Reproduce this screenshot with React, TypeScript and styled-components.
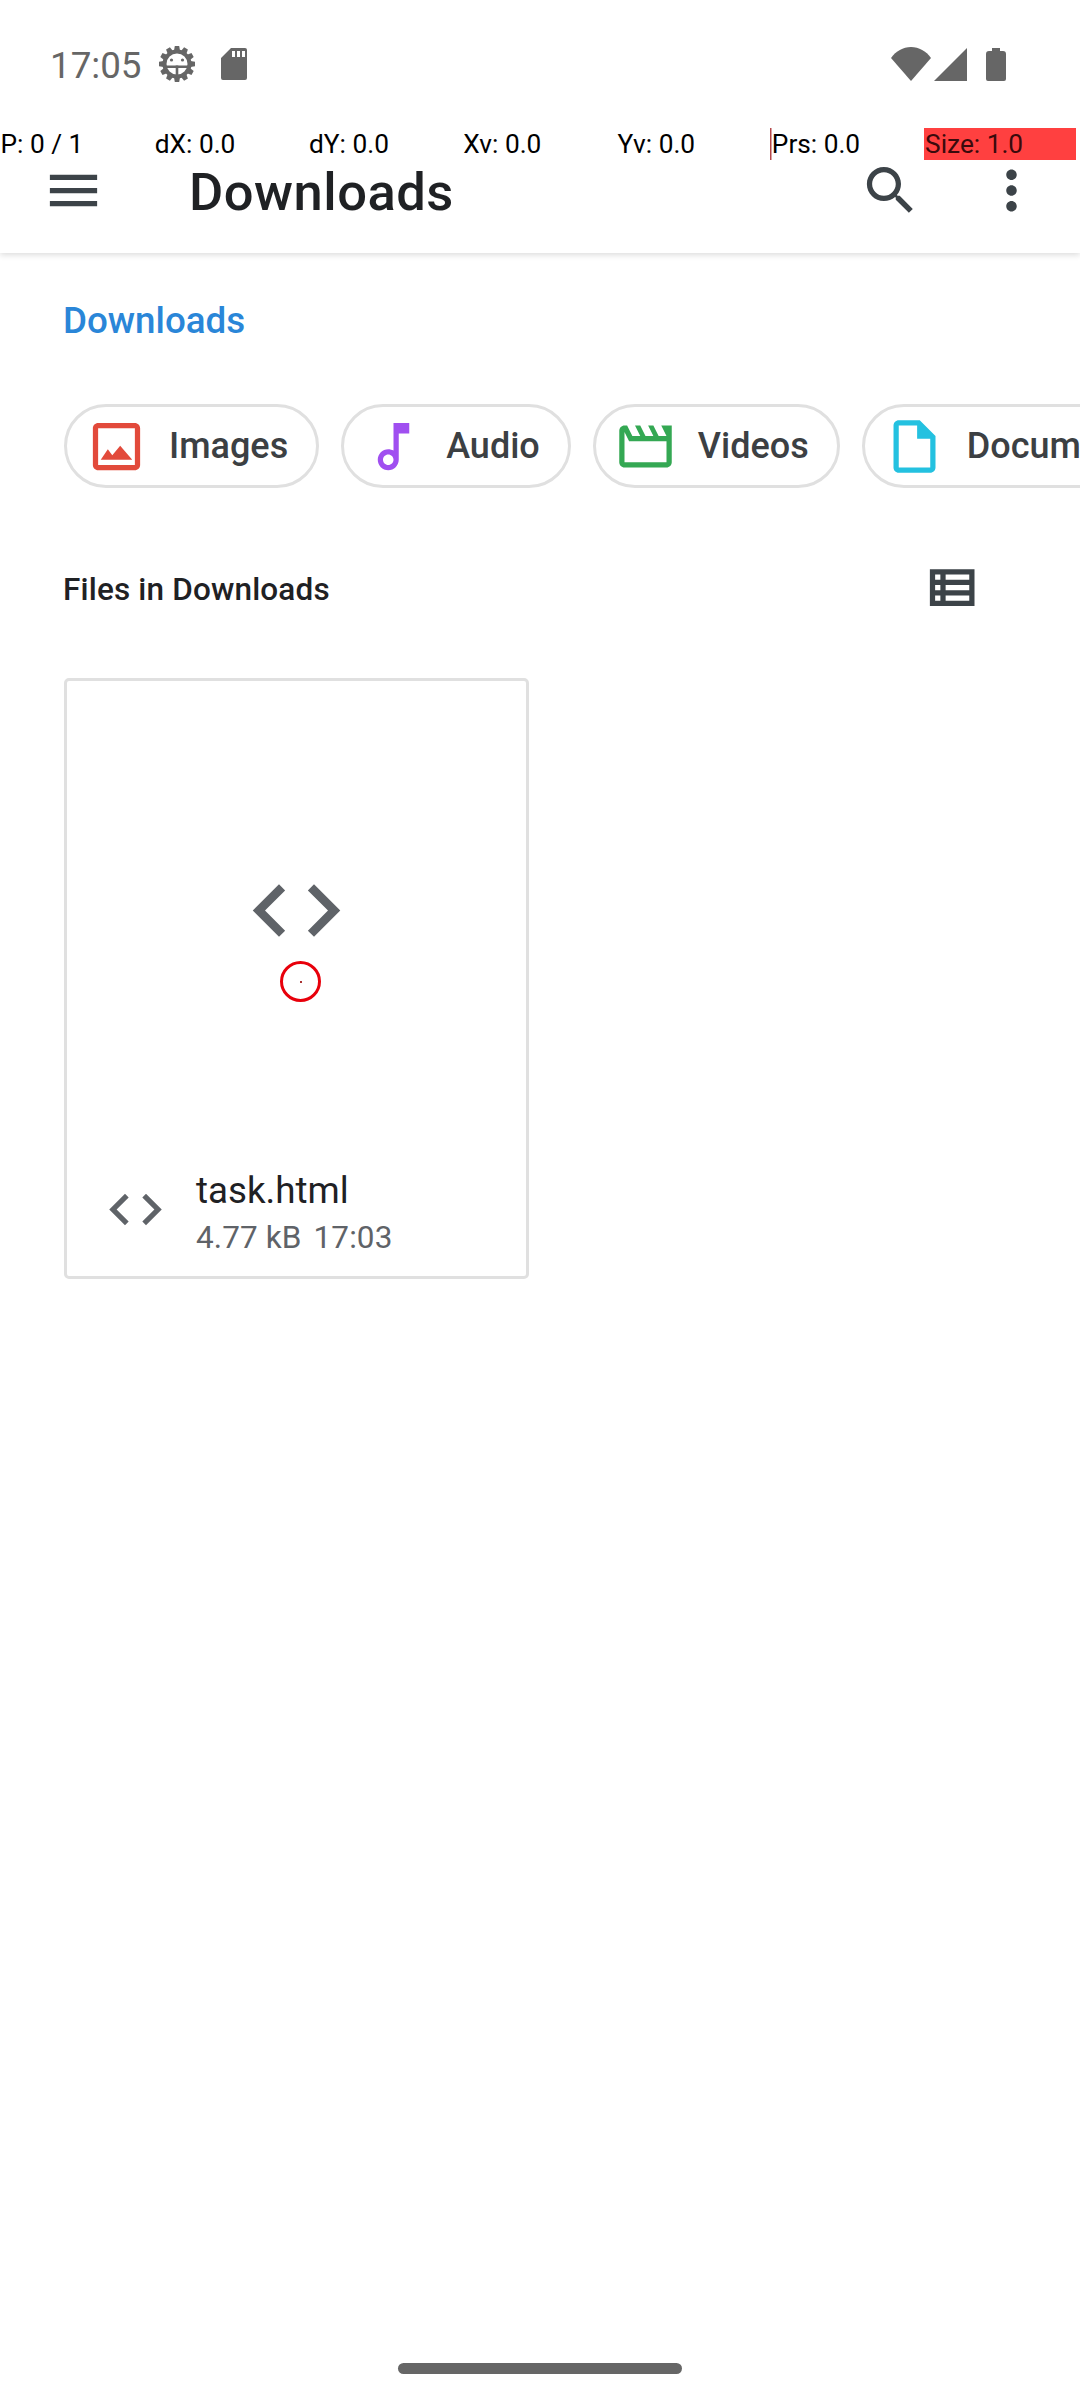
import React from 'react';
import styled, { createGlobalStyle } from 'styled-components';

const GlobalStyle = createGlobalStyle`
  html, body {
    margin: 0;
    padding: 0;
    background: #fff;
  }
  * {
    box-sizing: border-box;
  }
`;

const Screen = styled.div`
  position: relative;
  width: 1080px;
  height: 2400px;
  display: flex;
  flex-direction: column;
  overflow: hidden;
  background: #fff;
  font-family: Roboto, "Liberation Sans", sans-serif;
`;

const StatusBar = styled.div`
  height: 128px;
  flex: none;
  display: flex;
  align-items: center;
  padding: 0 74px 0 50px;
  color: #666;
`;

const Clock = styled.span`
  font-size: 36.75px;
  line-height: 43px;
  margin: 2px 16px 0 0;
`;

const StatusIcon = styled.svg<{ $gap?: number }>`
  display: block;
  flex: none;
  margin-left: ${({ $gap }) => $gap ?? 0}px;
`;

const Spacer = styled.div`
  flex: 1;
`;

const PointerStrip = styled.div`
  position: absolute;
  top: 128px;
  left: 0;
  display: flex;
  width: 1080px;
  height: 32px;
  z-index: 2;
`;

const PointerCell = styled.div<{ $bar?: 'line' | 'fill' }>`
  width: 154.28px;
  height: 32px;
  margin-left: ${({ $bar }) => ($bar ? '-1.5px' : '0')};
  margin-right: ${({ $bar }) => ($bar ? '1.5px' : '0')};
  padding-left: ${({ $bar }) => ($bar ? '1px' : '0.5px')};
  font-size: 26.25px;
  line-height: 32px;
  color: #000;
  white-space: nowrap;
  ${({ $bar }) => $bar === 'line' && `
    background: linear-gradient(#b5484a, #b5484a) no-repeat 0 0 / 1.5px 32px;
    padding-left: 2px;
  `}
  ${({ $bar }) => $bar === 'fill' && `
    background: linear-gradient(#ff4040, #ff4040) no-repeat 0 0 / 152px 32px;
    color: #3a0a0c;
  `}
`;

const Toolbar = styled.header`
  height: 125px;
  flex: none;
  display: flex;
  align-items: center;
  padding: 0 37px 0 42px;
  background: #fff;
  box-shadow: 0 2px 6px rgba(0, 0, 0, 0.14);
  clip-path: inset(0 0 -12px 0);
`;

const Title = styled.h1`
  flex: 1;
  margin: 2px 0 0 84px;
  font-size: 52.5px;
  line-height: 62px;
  font-weight: 500;
  letter-spacing: 0.5px;
  color: #1f2124;
`;

const ToolbarIcon = styled.svg<{ $gap?: number }>`
  display: block;
  flex: none;
  width: 63px;
  height: 63px;
  fill: #3c4348;
  margin-left: ${({ $gap }) => $gap ?? 0}px;
`;

const Breadcrumb = styled.div`
  margin: 46px 0 0 63px;
  font-size: 36.75px;
  line-height: 43px;
  font-weight: 500;
  color: #2a86d8;
`;

const ChipRow = styled.div`
  display: flex;
  gap: 22px;
  margin-top: 62px;
  padding-left: 64px;
  overflow: hidden;
`;

const Chip = styled.div`
  flex: none;
  height: 84px;
  display: flex;
  align-items: center;
  gap: 21px;
  padding: 0 28px 0 18px;
  border: 3px solid #e0e0e0;
  border-radius: 42px;
  font-size: 36px;
  font-weight: 500;
  color: #3c4043;
`;

const ChipIcon = styled.svg<{ $color: string }>`
  display: block;
  flex: none;
  width: 63px;
  height: 63px;
  fill: ${({ $color }) => $color};
`;

const SectionHeader = styled.div`
  height: 63px;
  margin-top: 68px;
  display: flex;
  align-items: center;
  justify-content: space-between;
  padding: 0 95px 0 63px;
`;

const SectionTitle = styled.h2`
  margin: 4px 0 0;
  font-size: 31.5px;
  line-height: 40px;
  font-weight: 500;
  letter-spacing: 0.16px;
  color: #1f2124;
`;

const ListIcon = styled.svg`
  display: block;
  width: 63px;
  height: 63px;
  fill: #3c4348;
`;

const FileCard = styled.article`
  position: relative;
  width: 465px;
  height: 601px;
  margin: 59px 0 0 64px;
  display: flex;
  flex-direction: column;
  border: 3px solid #e0e0e0;
  border-radius: 5px;
`;

const Thumbnail = styled.div`
  height: 458px;
  flex: none;
  display: flex;
  align-items: center;
  justify-content: center;
`;

const CodeIcon = styled.svg<{ $size: number }>`
  display: block;
  flex: none;
  width: ${({ $size }) => $size}px;
  height: ${({ $size }) => $size}px;
  fill: #5f6368;
`;

const CardFooter = styled.div`
  flex: 1;
  display: flex;
  align-items: center;
  gap: 29px;
  padding: 3px 0 0 37px;
`;

const FileText = styled.div`
  display: flex;
  flex-direction: column;
  margin-top: 6px;
`;

const FileName = styled.div`
  font-size: 36.75px;
  line-height: 44px;
  color: #1f2124;
`;

const FileMeta = styled.div`
  display: flex;
  gap: 12px;
  margin-top: 6px;
  font-size: 31.5px;
  line-height: 37px;
  letter-spacing: 0.1px;
  color: #5f6368;
`;

const TouchMark = styled.div`
  position: absolute;
  left: 213px;
  top: 280px;
  width: 41px;
  height: 41px;
  border: 3px solid #e8000b;
  border-radius: 50%;
  &::after {
    content: '';
    position: absolute;
    left: 16.5px;
    top: 16.5px;
    width: 2px;
    height: 2px;
    background: #a33;
  }
`;

const NavHandle = styled.div`
  position: absolute;
  left: 398px;
  bottom: 26px;
  width: 284px;
  height: 11px;
  border-radius: 6px;
  background: #666;
`;

const pointerValues = ['P: 0 / 1', 'dX: 0.0', 'dY: 0.0', 'Xv: 0.0', 'Yv: 0.0', 'Prs: 0.0', 'Size: 1.0'];

const CODE_PATH = 'M9.4 16.6L4.8 12l4.6-4.6L8 6l-6 6 6 6 1.4-1.4zm5.2 0l4.6-4.6-4.6-4.6L16 6l6 6-6 6-1.4-1.4z';

function DebugGear() {
  const teeth = Array.from({ length: 12 }, (_, i) => i * 30);
  return (
    <StatusIcon width="38" height="38" viewBox="0 0 38 38" $gap={0}>
      {teeth.map((deg) => (
        <path key={deg} d="M16.8 1h4.4l1 6h-6.4z" fill="#666" transform={`rotate(${deg} 19 19)`} />
      ))}
      <circle cx="19" cy="19" r="12.5" fill="none" stroke="#666" strokeWidth="4" />
      <rect x="7" y="20.5" width="24" height="2.5" fill="#666" />
      <rect x="17.7" y="20.5" width="2.6" height="12" fill="#666" />
      <circle cx="13.5" cy="15" r="1.6" fill="#666" />
      <circle cx="24.5" cy="15" r="1.6" fill="#666" />
    </StatusIcon>
  );
}

export default function App() {
  return (
    <Screen>
      <GlobalStyle />
      <StatusBar>
        <Clock>17:05</Clock>
        <DebugGear />
        <StatusIcon width="26" height="32" viewBox="0 0 26 32" $gap={25}>
          <path
            fill="#666"
            fillRule="evenodd"
            d="M10 0h14a2 2 0 0 1 2 2v28a2 2 0 0 1-2 2H2a2 2 0 0 1-2-2V10zM11 3v6h3V3zm5 0v6h3V3zm5 0v6h3V3z"
          />
        </StatusIcon>
        <Spacer />
        <StatusIcon width="40" height="34" viewBox="0 0 40 34">
          <path fill="#666" d="M0 11C5 4 12 0 20 0s15 4 20 11L20 34z" />
        </StatusIcon>
        <StatusIcon width="33" height="33" viewBox="0 0 33 33" $gap={3}>
          <path fill="#666" d="M33 0v33H0z" />
        </StatusIcon>
        <StatusIcon width="20" height="33" viewBox="0 0 20 33" $gap={19}>
          <path fill="#666" d="M6 0h8v3h3a3 3 0 0 1 3 3v25a2 2 0 0 1-2 2H2a2 2 0 0 1-2-2V6a3 3 0 0 1 3-3h3z" />
        </StatusIcon>
      </StatusBar>

      <PointerStrip>
        {pointerValues.map((value, i) => (
          <PointerCell key={value} $bar={i === 5 ? 'line' : i === 6 ? 'fill' : undefined}>
            {value}
          </PointerCell>
        ))}
      </PointerStrip>

      <Toolbar>
        <ToolbarIcon viewBox="0 0 24 24">
          <path d="M3 18h18v-2H3v2zm0-5h18v-2H3v2zm0-7v2h18V6H3z" />
        </ToolbarIcon>
        <Title>Downloads</Title>
        <ToolbarIcon viewBox="0 0 24 24">
          <path d="M15.5 14h-.79l-.28-.27C15.41 12.59 16 11.11 16 9.5 16 5.91 13.09 3 9.5 3S3 5.91 3 9.5 5.91 16 9.5 16c1.61 0 3.09-.59 4.23-1.57l.27.28v.79l5 4.99L20.49 19l-4.99-5zm-6 0C7.01 14 5 11.99 5 9.5S7.01 5 9.5 5 14 7.01 14 9.5 11.99 14 9.5 14z" />
        </ToolbarIcon>
        <ToolbarIcon viewBox="0 0 24 24" $gap={58}>
          <path d="M12 8c1.1 0 2-.9 2-2s-.9-2-2-2-2 .9-2 2 .9 2 2 2zm0 2c-1.1 0-2 .9-2 2s.9 2 2 2 2-.9 2-2-.9-2-2-2zm0 6c-1.1 0-2 .9-2 2s.9 2 2 2 2-.9 2-2-.9-2-2-2z" />
        </ToolbarIcon>
      </Toolbar>

      <Breadcrumb>Downloads</Breadcrumb>

      <ChipRow>
        <Chip>
          <ChipIcon viewBox="0 0 24 24" $color="#e24a3b">
            <path d="M19 5v14H5V5h14m0-2H5c-1.1 0-2 .9-2 2v14c0 1.1.9 2 2 2h14c1.1 0 2-.9 2-2V5c0-1.1-.9-2-2-2z" />
            <path d="M6 17l2.7-4 1.7 2.3 3-3.6L18 17z" />
          </ChipIcon>
          Images
        </Chip>
        <Chip>
          <ChipIcon viewBox="0 0 24 24" $color="#a04ff0">
            <path d="M12 3v10.55c-.59-.34-1.27-.55-2-.55-2.21 0-4 1.79-4 4s1.79 4 4 4 4-1.79 4-4V7h4V3h-6zm-2 16c-1.1 0-2-.9-2-2s.9-2 2-2 2 .9 2 2-.9 2-2 2z" />
          </ChipIcon>
          Audio
        </Chip>
        <Chip>
          <ChipIcon viewBox="0 0 24 24" $color="#34a853">
            <path d="M4 6.47L5.76 10H20v8H4V6.47M22 4h-4l2 4h-3l-2-4h-2l2 4h-3l-2-4H8l2 4H7L5 4H4c-1.1 0-1.99.9-1.99 2L2 18c0 1.1.9 2 2 2h16c1.1 0 2-.9 2-2V4z" />
          </ChipIcon>
          Videos
        </Chip>
        <Chip>
          <ChipIcon viewBox="0 0 24 24" $color="#24c1e0">
            <path d="M14 2H6c-1.1 0-1.99.9-1.99 2L4 20c0 1.1.89 2 1.99 2H18c1.1 0 2-.9 2-2V8l-6-6zM6 20V4h7v5h5v11H6z" />
          </ChipIcon>
          Documents
        </Chip>
      </ChipRow>

      <SectionHeader>
        <SectionTitle>Files in Downloads</SectionTitle>
        <ListIcon viewBox="0 0 24 24">
          <path d="M3 5v14h17V5H3zm4 12H5v-2h2v2zm0-4H5v-2h2v2zm0-4H5V7h2v2zm11 8H9v-2h9v2zm0-4H9v-2h9v2zm0-4H9V7h9v2z" />
        </ListIcon>
      </SectionHeader>

      <FileCard>
        <Thumbnail>
          <CodeIcon viewBox="0 0 24 24" $size={105}>
            <path d={CODE_PATH} />
          </CodeIcon>
        </Thumbnail>
        <CardFooter>
          <CodeIcon viewBox="0 0 24 24" $size={63}>
            <path d={CODE_PATH} />
          </CodeIcon>
          <FileText>
            <FileName>task.html</FileName>
            <FileMeta>
              <span>4.77 kB</span>
              <span>17:03</span>
            </FileMeta>
          </FileText>
        </CardFooter>
        <TouchMark />
      </FileCard>

      <NavHandle />
    </Screen>
  );
}
